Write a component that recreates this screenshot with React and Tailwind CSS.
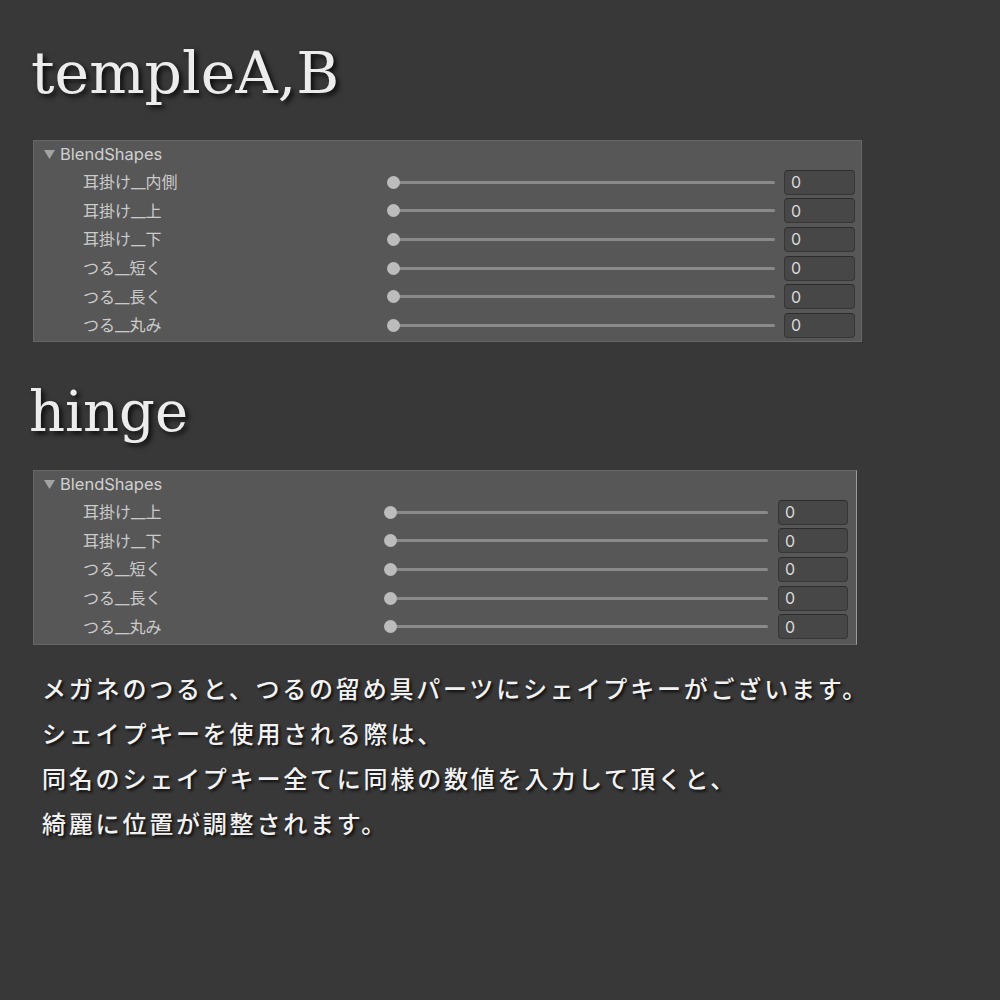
const panels = [
  {
    title: 'templeA,B',
    labelW: 'w-[353px]',
    sliderW: 'w-[388px]',
    gap: 'ml-[9px]',
    inputW: 'w-[71px]',
    width: 'w-[829px]',
    height: 'h-[202px]',
    rows: ['耳掛け__内側', '耳掛け__上', '耳掛け__下', 'つる__短く', 'つる__長く', 'つる__丸み'],
  },
  {
    title: 'hinge',
    labelW: 'w-[350px]',
    sliderW: 'w-[384px]',
    gap: 'ml-[10px]',
    inputW: 'w-[70px]',
    width: 'w-[824px]',
    height: 'h-[175px]',
    rows: ['耳掛け__上', '耳掛け__下', 'つる__短く', 'つる__長く', 'つる__丸み'],
  },
];

function Row({ label, p }) {
  return (
    <div className="flex items-center h-[28.6px]">
      <div className={`${p.labelW} pl-[49px] text-[16px] text-[#cbcbcb] leading-none font-['Inter','Noto_Sans_CJK_JP',sans-serif]`}>
        {label}
      </div>
      <div className={`${p.sliderW} relative flex items-center h-[14px]`}>
        <div className="absolute left-[6px] right-0 h-[3px] bg-[#8a8a8a] rounded-full"></div>
        <div className="relative w-[13px] h-[13px] rounded-full bg-[#bcbcbc]"></div>
      </div>
      <div className={`${p.gap} ${p.inputW} h-[25px] rounded-[4px] bg-[#474747] border border-[#363636] border-t-[#2c2c2c] flex items-center pl-[6px] text-[16px] text-[#dadada] font-['Inter',sans-serif]`}>
        0
      </div>
    </div>
  );
}

function Panel({ p }) {
  return (
    <div className={`${p.width} ${p.height} ml-[33px] bg-[#575757] border border-[#666666] overflow-hidden ${p.title === 'hinge' ? 'border-r-[#9a9a9a]' : ''}`}>
      <div className="flex items-center h-[27px] pl-[10px] gap-[5px]">
        <svg width="11" height="9" viewBox="0 0 11 9">
          <polygon points="0,0 11,0 5.5,9" fill="#a3a3a3" />
        </svg>
        <span className="text-[16.5px] text-[#d0d0d0] leading-none font-['Inter',sans-serif]">BlendShapes</span>
      </div>
      {p.rows.map((r) => (
        <Row key={r} label={r} p={p} />
      ))}
    </div>
  );
}

const heading = "leading-none text-[#ececec] font-['DejaVu_Serif',serif] [text-shadow:3px_3px_5px_rgba(0,0,0,0.8)]";

export default function App() {
  return (
    <div className="w-[1000px] h-[1000px] bg-[#383838] overflow-hidden">
      <div className="pt-[44px]">
        <h1 className={`${heading} text-[58.5px] ml-[31px] h-[57px]`}>templeA,B</h1>
      </div>
      <div className="mt-[39px]">
        <Panel p={panels[0]} />
      </div>
      <h1 className={`${heading} text-[56px] ml-[29px] mt-[42px] h-[57px]`}>hinge</h1>
      <div className="mt-[29px]">
        <Panel p={panels[1]} />
      </div>
      <div className="mt-[20px] ml-[42px] text-[24px] leading-[45px] tracking-[2.8px] font-medium text-[#f2f2f2] font-['Noto_Sans_CJK_JP',sans-serif] [text-shadow:2px_2px_3px_rgba(0,0,0,0.8)]">
        <p>メガネのつると、つるの留め具パーツにシェイプキーがございます。</p>
        <p>シェイプキーを使用される際は、</p>
        <p>同名のシェイプキー全てに同様の数値を入力して頂くと、</p>
        <p>綺麗に位置が調整されます。</p>
      </div>
    </div>
  );
}
